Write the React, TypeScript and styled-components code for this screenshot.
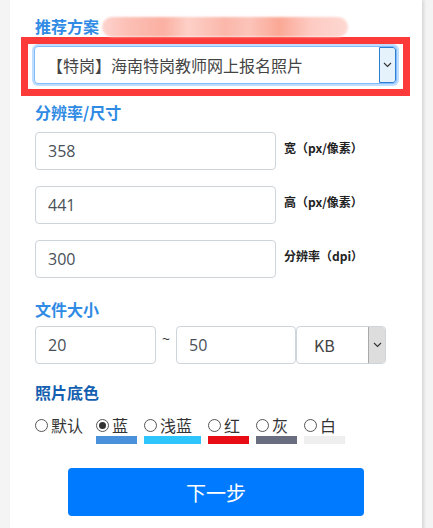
import React from "react";
import styled, { createGlobalStyle } from "styled-components";

const Global = createGlobalStyle`
  html, body { margin: 0; padding: 0; background: #f4f4f4; }
  body { font-family: "Noto Sans CJK SC", "Noto Sans", sans-serif; }
  * { box-sizing: border-box; }
`;

const Page = styled.div`
  width: 433px;
  height: 528px;
  overflow: hidden;
  padding: 0 11px 0 10px;
`;

const Card = styled.div`
  background: #fff;
  min-height: 560px;
  box-shadow: 2px 0 3px rgba(0, 0, 0, 0.12);
  padding: 14px 25px 0 25px;
  display: flex;
  flex-direction: column;
`;

const TitleRow = styled.div`
  display: flex;
  align-items: center;
  height: 23px;
`;

const Title = styled.div<{ $dark?: boolean }>`
  font-size: 16px;
  font-weight: 700;
  line-height: 24px;
  height: 24px;
  color: ${(p) => (p.$dark ? "#145fb0" : "#2f8be4")};
`;

const Blur = styled.div`
  margin-left: 3px;
  width: 246px;
  height: 20px;
  border-radius: 10px;
  margin-top: 3px;
  background: linear-gradient(
    90deg,
    #fdd3cf 0%,
    #fcc0b6 10%,
    #fbb0a2 25%,
    #fdd0c8 35%,
    #fbb7aa 50%,
    #fcc4ba 60%,
    #fba895 72%,
    #fdcbc3 85%,
    #fed8d2 100%
  );
  filter: blur(1px);
`;

const RedFrame = styled.div`
  margin: 0 -13px 0 -14px;
  border: 7px solid #fd3a3a;
  padding: 2px 6px 5px 6px;
  background: #fff;
`;

const SelectBox = styled.div<{ $focus?: boolean; $w?: string }>`
  display: flex;
  align-items: stretch;
  height: 38px;
  width: ${(p) => p.$w || "100%"};
  border: 1px solid ${(p) => (p.$focus ? "#80bdff" : "#ced4da")};
  border-radius: 4px;
  background: #fff;
  box-shadow: ${(p) => (p.$focus ? "0 0 0 2px rgba(0,123,255,0.25)" : "none")};
  overflow: hidden;
`;

const SelectText = styled.div<{ $pad?: number }>`
  flex: 1;
  display: flex;
  align-items: center;
  padding-left: ${(p) => p.$pad ?? 12}px;
  font-size: 16px;
  color: #444;
  font-family: "Noto Sans CJK SC", "Noto Sans", sans-serif;
`;

const Arrow = styled.div<{ $blue?: boolean }>`
  width: 17px;
  display: flex;
  align-items: center;
  justify-content: center;
  background: ${(p) => (p.$blue ? "#e5f1fb" : "#dddddd")};
  border-left: 1px solid ${(p) => (p.$blue ? "#2f7dd1" : "#a9a9a9")};
  ${(p) => (p.$blue ? "border: 1px solid #2f7dd1; border-radius: 0 3px 3px 0;" : "")}
`;

const Section = styled.div<{ $mt: number }>`
  margin-top: ${(p) => p.$mt}px;
`;

const FieldRow = styled.div<{ $mt: number }>`
  display: flex;
  align-items: flex-start;
  gap: 8px;
  margin-top: ${(p) => p.$mt}px;
`;

const Input = styled.div<{ $w: number }>`
  width: ${(p) => p.$w}px;
  height: 38px;
  border: 1px solid #ced4da;
  border-radius: 4px;
  padding-left: 12px;
  display: flex;
  align-items: center;
  font-family: "Open Sans", "Noto Sans", sans-serif;
  font-size: 16px;
  color: #495057;
`;

const UnitLabel = styled.div`
  font-size: 12px;
  font-weight: 700;
  color: #222;
  padding-top: 8px;
  line-height: 16px;
`;

const SizeRow = styled.div`
  display: flex;
  align-items: flex-start;
  margin-top: 5px;
`;

const Tilde = styled.div`
  width: 20px;
  text-align: center;
  font-size: 14px;
  line-height: 14px;
  color: #333;
  padding-top: 6px;
  font-family: "Open Sans", sans-serif;
`;

const RadioRow = styled.div`
  display: flex;
  margin-top: 11px;
  gap: 7px;
`;

const RadioItem = styled.div`
  display: flex;
  flex-direction: column;
`;

const RadioLabel = styled.div<{ $pr: number }>`
  display: flex;
  align-items: center;
  height: 20px;
  font-size: 16px;
  color: #333;
  gap: 3px;
  padding-right: ${(p) => p.$pr}px;
`;

const Circle = styled.span<{ $on?: boolean }>`
  width: 13px;
  height: 13px;
  border-radius: 50%;
  border: 1px solid #555;
  display: inline-flex;
  align-items: center;
  justify-content: center;
  &::after {
    content: "";
    width: 7px;
    height: 7px;
    border-radius: 50%;
    background: ${(p) => (p.$on ? "#333" : "transparent")};
  }
`;

const Swatch = styled.div<{ $c: string }>`
  height: 8px;
  margin-top: 1px;
  background: ${(p) => p.$c};
`;

const Button = styled.button`
  margin: 24px 0 0 33px;
  width: 296px;
  height: 48px;
  border: none;
  border-radius: 4px;
  background: #007bff;
  color: #fff;
  font-size: 20px;
  font-weight: 400;
  font-family: "Noto Sans CJK SC", sans-serif;
`;

const Chevron = () => (
  <svg width="9" height="6" viewBox="0 0 9 6">
    <path d="M1 1l3.5 3.5L8 1" fill="none" stroke="#333" strokeWidth="1.1" />
  </svg>
);

const colors = [
  { label: "默认", c: "", pr: 6 },
  { label: "蓝", c: "#4a91dc", on: true, pr: 9 },
  { label: "浅蓝", c: "#2ec4fc", pr: 9 },
  { label: "红", c: "#e80c15", pr: 9 },
  { label: "灰", c: "#686d7f", pr: 9 },
  { label: "白", c: "#eeeeee", pr: 9 },
];

export default function App() {
  return (
    <>
      <Global />
      <Page>
        <Card>
          <TitleRow>
            <Title>推荐方案</Title>
            <Blur />
          </TitleRow>
          <RedFrame>
            <SelectBox $focus>
              <SelectText $pad={12}>【特岗】海南特岗教师网上报名照片</SelectText>
              <Arrow $blue>
                <Chevron />
              </Arrow>
            </SelectBox>
          </RedFrame>
          <Section $mt={4}>
            <Title>分辨率/尺寸</Title>
            <FieldRow $mt={8}>
              <Input $w={241}>358</Input>
              <UnitLabel>宽（px/像素）</UnitLabel>
            </FieldRow>
            <FieldRow $mt={16}>
              <Input $w={241}>441</Input>
              <UnitLabel>高（px/像素）</UnitLabel>
            </FieldRow>
            <FieldRow $mt={16}>
              <Input $w={241}>300</Input>
              <UnitLabel>分辨率（dpi）</UnitLabel>
            </FieldRow>
          </Section>
          <Section $mt={19}>
            <Title>文件大小</Title>
            <SizeRow>
              <Input $w={121}>20</Input>
              <Tilde>~</Tilde>
              <Input $w={120}>50</Input>
              <SelectBox $w="90px">
                <SelectText $pad={17}>KB</SelectText>
                <Arrow>
                  <Chevron />
                </Arrow>
              </SelectBox>
            </SizeRow>
          </Section>
          <Section $mt={16}>
            <Title $dark>照片底色</Title>
            <RadioRow>
              {colors.map((it) => (
                <RadioItem key={it.label}>
                  <RadioLabel $pr={it.pr}>
                    <Circle $on={it.on} />
                    {it.label}
                  </RadioLabel>
                  {it.c ? <Swatch $c={it.c} /> : null}
                </RadioItem>
              ))}
            </RadioRow>
          </Section>
          <Button>下一步</Button>
        </Card>
      </Page>
    </>
  );
}
